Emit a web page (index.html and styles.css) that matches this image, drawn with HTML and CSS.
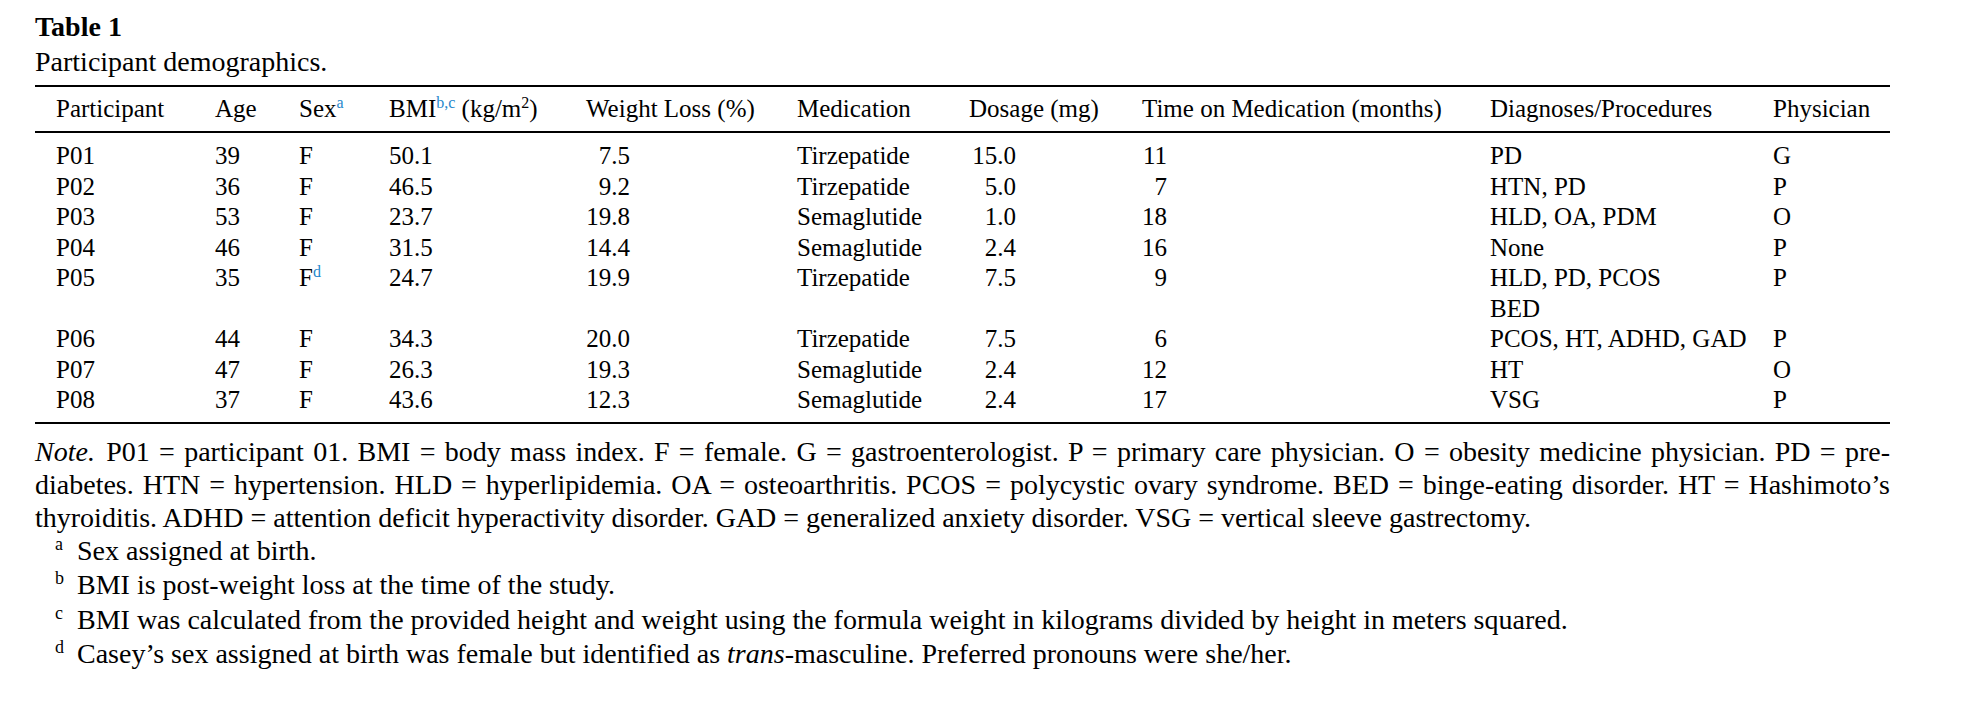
FILE: index.html
```html
<!DOCTYPE html>
<html lang="en">
<head>
<meta charset="utf-8">
<title>Table 1 — Participant demographics</title>
<link rel="stylesheet" href="styles.css">
</head>
<body>
<div class="page">
  <h1 class="title">Table 1</h1>
  <p class="caption">Participant demographics.</p>
  <table class="demo">
    <thead>
      <tr>
        <th class="w-part first">Participant</th>
        <th class="w-age">Age</th>
        <th class="w-sex">Sex<sup class="ref">a</sup></th>
        <th class="w-bmi">BMI<sup class="ref">b,c</sup> (kg/m<sup class="pow">2</sup>)</th>
        <th class="w-wl">Weight Loss (%)</th>
        <th class="w-med">Medication</th>
        <th class="w-dose">Dosage (mg)</th>
        <th class="w-time">Time on Medication (months)</th>
        <th class="w-diag">Diagnoses/Procedures</th>
        <th class="w-phys">Physician</th>
      </tr>
    </thead>
    <tbody>
      <tr><td class="first">P01</td><td>39</td><td>F</td><td>50.1</td><td class="n-wl">7.5</td><td>Tirzepatide</td><td class="n-dose">15.0</td><td class="n-time">11</td><td>PD</td><td>G</td></tr>
      <tr><td class="first">P02</td><td>36</td><td>F</td><td>46.5</td><td class="n-wl">9.2</td><td>Tirzepatide</td><td class="n-dose">5.0</td><td class="n-time">7</td><td>HTN, PD</td><td>P</td></tr>
      <tr><td class="first">P03</td><td>53</td><td>F</td><td>23.7</td><td class="n-wl">19.8</td><td>Semaglutide</td><td class="n-dose">1.0</td><td class="n-time">18</td><td>HLD, OA, PDM</td><td>O</td></tr>
      <tr><td class="first">P04</td><td>46</td><td>F</td><td>31.5</td><td class="n-wl">14.4</td><td>Semaglutide</td><td class="n-dose">2.4</td><td class="n-time">16</td><td>None</td><td>P</td></tr>
      <tr><td class="first">P05</td><td>35</td><td>F<sup class="ref">d</sup></td><td>24.7</td><td class="n-wl">19.9</td><td>Tirzepatide</td><td class="n-dose">7.5</td><td class="n-time">9</td><td>HLD, PD, PCOS<br>BED</td><td>P</td></tr>
      <tr><td class="first">P06</td><td>44</td><td>F</td><td>34.3</td><td class="n-wl">20.0</td><td>Tirzepatide</td><td class="n-dose">7.5</td><td class="n-time">6</td><td>PCOS, HT, ADHD, GAD</td><td>P</td></tr>
      <tr><td class="first">P07</td><td>47</td><td>F</td><td>26.3</td><td class="n-wl">19.3</td><td>Semaglutide</td><td class="n-dose">2.4</td><td class="n-time">12</td><td>HT</td><td>O</td></tr>
      <tr><td class="first">P08</td><td>37</td><td>F</td><td>43.6</td><td class="n-wl">12.3</td><td>Semaglutide</td><td class="n-dose">2.4</td><td class="n-time">17</td><td>VSG</td><td>P</td></tr>
    </tbody>
  </table>
  <p class="note"><em class="lead">Note.</em> P01 = participant 01. BMI = body mass index. F = female. G = gastroenterologist. P = primary care physician. O = obesity medicine physician. PD = pre-diabetes. HTN = hypertension. HLD = hyperlipidemia. OA = osteoarthritis. PCOS = polycystic ovary syndrome. BED = binge-eating disorder. HT = Hashimoto’s thyroiditis. ADHD = attention deficit hyperactivity disorder. GAD = generalized anxiety disorder. VSG = vertical sleeve gastrectomy.</p>
  <p class="fn"><span class="mk">a</span>Sex assigned at birth.</p>
  <p class="fn"><span class="mk">b</span>BMI is post-weight loss at the time of the study.</p>
  <p class="fn"><span class="mk">c</span>BMI was calculated from the provided height and weight using the formula weight in kilograms divided by height in meters squared.</p>
  <p class="fn"><span class="mk">d</span>Casey’s sex assigned at birth was female but identified as <em>trans</em>-masculine. Preferred pronouns were she/her.</p>
</div>
</body>
</html>
```

FILE: styles.css
```css
* {
  box-sizing: border-box;
}

body {
  margin: 0;
  background: #ffffff;
  color: #000000;
  font-family: "Liberation Serif", "Times New Roman", serif;
}

.page {
  padding: 9px 0 0 35px;
  width: 1890px;
}

.title {
  margin: 0;
  font-size: 28px;
  line-height: 35px;
  font-weight: bold;
}

.caption {
  margin: 0;
  font-size: 28px;
  line-height: 35px;
}

/* ---------- table ---------- */
.demo {
  margin-top: 6px;
  width: 1855px;
  table-layout: fixed;
  border-collapse: separate;
  border-spacing: 0;
  font-size: 25px;
}

.demo th {
  font-weight: normal;
  text-align: left;
  vertical-align: top;
  line-height: 30px;
  padding: 7px 0 7px 0;
  border-top: 2px solid #000;
  border-bottom: 2px solid #000;
  white-space: nowrap;
}

.demo td {
  line-height: 30.5px;
  padding: 0;
  text-align: left;
  vertical-align: top;
  white-space: nowrap;
}

.demo tbody tr:first-child td {
  padding-top: 8px;
}

.demo tbody tr:last-child td {
  padding-bottom: 6px;
  border-bottom: 2px solid #000;
}

.demo .first {
  padding-left: 21px;
}

.w-part { width: 180px; }
.w-age  { width: 84px; }
.w-sex  { width: 90px; }
.w-bmi  { width: 197px; }
.w-wl   { width: 211px; }
.w-med  { width: 172px; }
.w-dose { width: 173px; }
.w-time { width: 348px; }
.w-diag { width: 283px; }
.w-phys { width: 117px; }

.demo td.n-wl {
  text-align: right;
  padding-right: 167px;
}

.demo td.n-dose {
  text-align: right;
  padding-right: 126px;
}

.demo td.n-time {
  text-align: right;
  padding-right: 323px;
}

.ref {
  color: #1f87cc;
  font-size: 16px;
  line-height: 0;
  vertical-align: super;
}

.pow {
  font-size: 16px;
  line-height: 0;
  vertical-align: super;
}

/* ---------- notes ---------- */
.note {
  margin: 11px 0 0 0;
  width: 1855px;
  font-size: 28px;
  line-height: 33px;
  text-align: justify;
}

.note .lead {
  padding-right: 2px;
}

.fn {
  margin: 0;
  padding-left: 20px;
  font-size: 28px;
  line-height: 34.5px;
}

.mk {
  display: inline-block;
  width: 22px;
  font-size: 18px;
  line-height: 0;
  vertical-align: 10px;
}
```
